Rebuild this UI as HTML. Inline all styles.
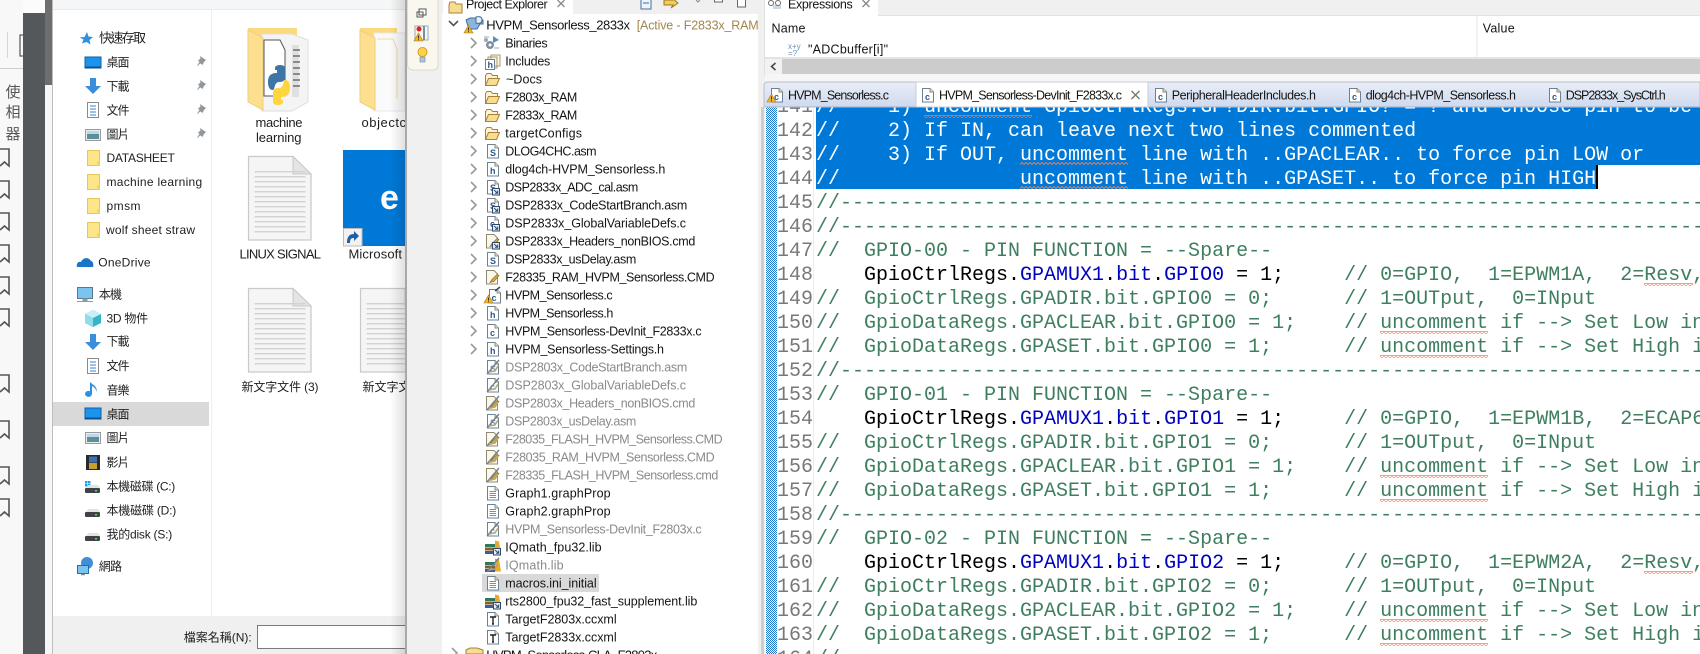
<!DOCTYPE html>
<html><head><meta charset="utf-8"><style>
html,body{margin:0;padding:0;width:1700px;height:654px;overflow:hidden;background:#fff}
svg{display:block}
text{white-space:pre}
.n{font:12px "Liberation Sans","Noto Sans CJK TC",sans-serif;fill:#1e1e1e}
.th{font:13px "Liberation Sans","Noto Sans CJK TC",sans-serif;fill:#1e1e1e}
.t{font:12.5px "Liberation Sans",sans-serif;fill:#141414}
.g{font:12.5px "Liberation Sans",sans-serif;fill:#8a8a8a}
.l{font:bold 9px "Liberation Sans",sans-serif;fill:#2b5a8c}
.lg{font:bold 9px "Liberation Sans",sans-serif;fill:#7d8fa0}
.m{font:20px "Liberation Mono",monospace}
.no{fill:#787878;text-anchor:end}
.c{fill:#3f7f5f}
.w{fill:#fff}
.k{fill:#000}
.b{fill:#0000c0}
</style></head><body>
<svg xmlns="http://www.w3.org/2000/svg" width="1700" height="654" viewBox="0 0 1700 654">
<defs>
<pattern id="dith" width="2" height="2" patternUnits="userSpaceOnUse"><rect width="2" height="2" fill="#fff"/><rect width="1" height="1" fill="#1f78d0"/><rect x="1" y="1" width="1" height="1" fill="#1f78d0"/></pattern>
<pattern id="sq" width="4" height="3" patternUnits="userSpaceOnUse"><path d="M0 2.5L2 .5L4 2.5" fill="none" stroke="#ec7a50" stroke-width="1"/></pattern>
<pattern id="dl" width="51" height="5" patternUnits="userSpaceOnUse"><rect width="51" height="1.4" fill="#d2d2d2"/></pattern>
<linearGradient id="sh" x1="0" x2="1" y1="0" y2="0"><stop offset="0" stop-color="#000" stop-opacity="0"/><stop offset="1" stop-color="#000" stop-opacity=".13"/></linearGradient>
<linearGradient id="tb" x1="0" x2="0" y1="0" y2="1"><stop offset="0" stop-color="#e9edf7"/><stop offset="1" stop-color="#cfdaef"/></linearGradient>
<g id="pg"><path d="M.5.5h7.5l3.5 3.5v10H.5z" fill="#fff" stroke="#6d8194"/><path d="M8 .5v3.5h3.5" fill="#e6e0c8" stroke="#9a8a60"/></g>
<g id="ch"><path d="M0 0l5 5-5 5" fill="none" stroke="#9a9a9a" stroke-width="1.6"/></g>
<g id="fo"><path d="M.5 13.5V3.5l1.5-2h4l1.5 2h5v3" fill="#fdf3cf" stroke="#a8813a"/><path d="M.5 13.5l3-7h11l-3 7z" fill="#f8dc90" stroke="#a8813a"/></g>
<g id="ln"><rect x=".5" y=".5" width="7" height="6.5" fill="#e8eef6" stroke="#2c4a70"/><path d="M2 2l3.5 3M3 5.3h2.7V2.5" fill="none" stroke="#2c4a70"/></g>
<g id="ex"><path d="M13 0L1 14" stroke="#6d8194" stroke-width="1.4"/><path d="M3 12l6-1 3-5" fill="none" stroke="#b8a468" stroke-width="1.5"/></g>
<g id="cm"><path d="M.5.5h7.5l3.5 3.5v10H.5z" fill="#fbf8ea" stroke="#8f8a70"/><path d="M4 12.5l2-3 5-5 2 1-5 6z" fill="#d9a93c" stroke="#8a6a20" stroke-width=".7"/></g>
<g id="tx"><use href="#pg"/><path d="M2.5 5.5h6.5M2.5 7.5h6.5M2.5 9.5h6.5M2.5 11.5h6.5" stroke="#6f8fb5"/></g>
<g id="li"><rect x="0" y="4" width="10" height="3" fill="#2f7a5a"/><rect x="0" y="7.500" width="10" height="3" fill="#8b5a2b"/><rect x="0" y="11" width="10" height="3" fill="#3a5f95"/><path d="M10 .5l4 1 2 12h-6z" fill="#e8a92c"/></g>
<g id="xm"><use href="#pg"/><path d="M3 5h6M6 5v7M5 12h2" stroke="#222" stroke-width="1.4" fill="none"/></g>
<g id="wn"><path d="M4.500 0l4.500 8H0z" fill="#f3b62e" stroke="#a97a12" stroke-width=".6"/><path d="M4.500 2.500v3M4.500 6.300v1" stroke="#333"/></g>
<g id="nf"><path d="M.5.500h12v15H.5z" fill="#fde68a" stroke="#e6c65a"/><path d="M10 11h2.500v4.500H10z" fill="#f5d56a"/></g>
<g id="dk"><path d="M86 8l2-3h10l2 3z" fill="#e3e3e3"/><rect x="85" y="8" width="15" height="5" rx="1" fill="#3f4347"/><rect x="95" y="10" width="2" height="1.500" fill="#55e055"/></g>
<g id="doc"><path d="M.5.500H45L63 18V84H.5z" fill="#f5f5f5" stroke="#c9c9c9" stroke-width="1.200"/><path d="M45 .5V18H63z" fill="#e4e4e4" stroke="#c9c9c9"/><rect x="6.500" y="14" width="51" height="64" fill="url(#dl)"/></g>
<clipPath id="cL"><rect x="0" y="0" width="23" height="654"/></clipPath>
<clipPath id="cD"><rect x="53" y="0" width="352.500" height="654"/></clipPath>
<clipPath id="cP"><rect x="442" y="0" width="316" height="654"/></clipPath>
</defs>

<!-- base -->
<rect width="1700" height="654" fill="#fff"/>

<!-- far left app -->
<rect x="0" y="0" width="23" height="654" fill="#f8f8f8"/>
<rect x="0" y="68" width="23" height="1" fill="#cfcfcf"/>
<rect x="7" y="32" width="1" height="26" fill="#d5d5d5"/>
<rect x="20" y="35" width="4" height="21" fill="none" stroke="#555" stroke-width="1.200"/>
<g clip-path="url(#cL)">
<text x="5.500" y="97" style="font:15px 'Noto Sans CJK TC',sans-serif" fill="#555">使</text>
<text x="5.500" y="117" style="font:15px 'Noto Sans CJK TC',sans-serif" fill="#555">相</text>
<text x="5.500" y="139" style="font:15px 'Noto Sans CJK TC',sans-serif" fill="#555">器</text>
</g>
<path id="bm" d="M0 149h9v17l-4.500-4L0 166" fill="none" stroke="#555" stroke-width="1.600"/>
<path d="M0 181h9v17l-4.500-4L0 198M0 213h9v17l-4.500-4L0 230M0 245h9v17l-4.500-4L0 262M0 277h9v17l-4.500-4L0 294M0 309h9v17l-4.500-4L0 326M0 375h9v17l-4.500-4L0 392M0 421h9v17l-4.500-4L0 438M0 467h9v17l-4.500-4L0 484M0 499h9v17l-4.500-4L0 516" fill="none" stroke="#555" stroke-width="1.600"/>

<!-- dark band -->
<rect x="23" y="13" width="22" height="641" fill="#54585b"/>
<rect x="23" y="0" width="22" height="13" fill="#fbfbfb"/>
<rect x="45" y="0" width="8" height="85" fill="#6e6e6e"/>
<rect x="45" y="85" width="7" height="569" fill="#f6f6f6"/>
<rect x="52" y="0" width="1" height="654" fill="#bdbdbd"/>

<!-- dialog -->
<rect x="53" y="0" width="353" height="654" fill="#fff"/>
<rect x="53" y="0" width="353" height="9" fill="#f5f6f7"/>
<rect x="53" y="9" width="353" height="1" fill="#eaeaea"/>
<rect x="211" y="10" width="1" height="606" fill="#efefef"/>
<rect x="53" y="402" width="156" height="24" fill="#d9d9d9"/>

<!-- nav icons -->
<path d="M87 32l1.500 4.500 4.500.5-3.500 3 1 4.500-4-2.500-4.500 1.500 1.500-4-4-2 5-.5z" fill="#2f8fe0"/>
<path d="M85 57h16v11H85z" fill="#1b94ee" stroke="#0e5fa8"/><rect x="85" y="66.500" width="16" height="2" fill="#0d4f8f"/>
<path d="M90 78h6v8h5l-8 8-8-8h5z" fill="#3a8fdc"/>
<rect x="87.500" y="102.500" width="11" height="15" fill="#fff" stroke="#8a8a8a"/><path d="M90 106h6M90 109h6M90 112h6M90 115h6" stroke="#3f85c9"/>
<rect x="85.500" y="129.500" width="15" height="11" fill="#e8eef0" stroke="#9a9a9a"/><path d="M87 134h12v5H87z" fill="#5c8f96"/><path d="M87 131h12v3H87z" fill="#bcd6ee"/>
<use href="#nf" x="87" y="150"/><use href="#nf" x="87" y="174"/><use href="#nf" x="87" y="198"/><use href="#nf" x="87" y="222"/>
<path d="M77 267c-1-4 2-6 4-5 2-5 8-5 10-1 2 0 3 4 2 6z" fill="#1a74c8"/>
<rect x="77.500" y="287.500" width="15" height="11" fill="#7cc4f0" stroke="#5a7890"/><path d="M83 299h4v2h-4zM77 301.500h16" stroke="#8a9aa8" fill="#8a9aa8"/>
<path d="M93 310l8 4v9l-8 4-8-4v-9z" fill="#34b6c8"/><path d="M93 310l8 4-8 4-8-4z" fill="#c9f0f6"/><path d="M85 314l8 4v9l-8-4z" fill="#8fdde8"/>
<path d="M90 341" fill="none"/>
<path d="M90 334h6v8h5l-8 8-8-8h5z" fill="#3a8fdc"/>
<rect x="87.500" y="358.500" width="11" height="15" fill="#fff" stroke="#8a8a8a"/><path d="M90 362h6M90 365h6M90 368h6M90 371h6" stroke="#3f85c9"/>
<path d="M92 382v12a3.500 3 0 1 1-2-2.800V382c3 3 7 4 7 10-1-3-3-5-5-6z" fill="#2a93e4"/>
<path d="M85 408h16v11H85z" fill="#1b94ee" stroke="#0e5fa8"/><rect x="85" y="417.500" width="16" height="2" fill="#0d4f8f"/>
<rect x="85.500" y="432.500" width="15" height="11" fill="#e8eef0" stroke="#9a9a9a"/><path d="M87 437h12v5H87z" fill="#5c8f96"/><path d="M87 434h12v3H87z" fill="#bcd6ee"/>
<rect x="86" y="455" width="14" height="15" fill="#2a2a2a"/><rect x="89" y="456.500" width="8" height="6" fill="#3a6fb0"/><rect x="89" y="463" width="8" height="6" fill="#c9a030"/>
<rect x="85" y="481" width="2.500" height="2.500" fill="#19a0f0"/><rect x="88" y="481" width="2.500" height="2.500" fill="#19a0f0"/><rect x="85" y="484" width="2.500" height="2.500" fill="#19a0f0"/><rect x="88" y="484" width="2.500" height="2.500" fill="#19a0f0"/>
<use href="#dk" y="480"/><use href="#dk" y="504"/><use href="#dk" y="528"/>
<circle cx="87" cy="563" r="6" fill="#3f8fd6"/><rect x="77.500" y="565.500" width="11" height="8" fill="#7cc4f0" stroke="#1b6fb8"/><path d="M81 574.500h4" stroke="#7a8a98" stroke-width="1.500"/>
<!-- pins -->
<path d="M200 56l6 4-2 2-1.500 3-2-1.500-4 3 3-4.500-1.500-1.500 2.500-2zM200 80l6 4-2 2-1.500 3-2-1.500-4 3 3-4.500-1.500-1.500 2.500-2zM200 104l6 4-2 2-1.500 3-2-1.500-4 3 3-4.500-1.500-1.500 2.500-2zM200 128l6 4-2 2-1.500 3-2-1.500-4 3 3-4.500-1.500-1.500 2.500-2z" fill="#8f979c"/>

<!-- nav text -->
<text class="th" x="99" y="42.500" textLength="47">快速存取</text>
<text class="n" x="106.500" y="66.500" textLength="23">桌面</text>
<text class="n" x="106.500" y="90.500" textLength="23">下載</text>
<text class="n" x="106.500" y="114.500" textLength="23">文件</text>
<text class="n" x="106.500" y="138.500" textLength="23">圖片</text>
<text class="n" x="106.500" y="162" textLength="68.300">DATASHEET</text>
<text class="n" x="106.500" y="186" textLength="95.700">machine learning</text>
<text class="n" x="106.500" y="210" textLength="34">pmsm</text>
<text class="n" x="106" y="234" textLength="89">wolf sheet straw</text>
<text class="n" x="98.300" y="266.500" textLength="52.300">OneDrive</text>
<text class="n" x="98.700" y="298.500" textLength="23.300">本機</text>
<text class="n" x="106.500" y="322.500" textLength="41.700">3D 物件</text>
<text class="n" x="106.500" y="345.500" textLength="23">下載</text>
<text class="n" x="106.500" y="370" textLength="23">文件</text>
<text class="n" x="106.500" y="394.500" textLength="23">音樂</text>
<text class="n" x="106.500" y="418.500" textLength="23">桌面</text>
<text class="n" x="106.500" y="442" textLength="23">圖片</text>
<text class="n" x="106.500" y="466.500" textLength="23">影片</text>
<text class="n" x="106.500" y="490.500" textLength="68.700">本機磁碟 (C:)</text>
<text class="n" x="106.500" y="514.500" textLength="69.700">本機磁碟 (D:)</text>
<text class="n" x="106.500" y="538.500" textLength="65.700">我的disk (S:)</text>
<text class="n" x="98.700" y="570.500" textLength="23.300">網路</text>

<!-- thumbnails -->
<g clip-path="url(#cD)">
<path d="M248 28h49v13h-49z" fill="#fbd97e"/>
<path d="M262 34h30l16 6v62l-16 9H262z" fill="#f4f4f4" stroke="#dedede"/>
<path d="M264 40h16l5 10v46h-21z" fill="#fff" stroke="#555"/>
<path d="M292 45h7v52h-7z" fill="#e0e0e0"/>
<path d="M293 50h7M293 56h7M293 62h7M293 68h7M293 74h7M293 80h7M293 86h7" stroke="#555" stroke-width="1.300"/>
<path d="M268 82c0-8 5-9 9-9v-3h-2v-2c0-4 10-4 10 0v9c0 5-4 5-6 5-5 0-4 8-6 8-4 0-5-4-5-8z" fill="#3c75a6"/>
<path d="M290 88c0 8-5 9-9 9v3h2v2c0 4-10 4-10 0v-9c0-5 4-5 6-5 5 0 4-8 6-8 4 0 5 4 5 8z" fill="#fcd53f"/>
<path d="M248 30l15 8v72l-15-8z" fill="#fce08f" stroke="#f0cf78"/>
<text class="th" x="255.500" y="127" textLength="47" fill="#222">machine</text>
<text class="th" x="256" y="142" textLength="45.500">learning</text>

<path d="M360 28h37v12h-37z" fill="#fbd97e"/>
<path d="M374 33h31v78h-31z" fill="#fafafa" stroke="#e8e8e8"/>
<path d="M377 39h16l4 10v50" fill="none" stroke="#f0dca0"/>
<path d="M360 30l15 8v72l-15-8z" fill="#fce08f" stroke="#f0cf78"/>
<text class="th" x="361.500" y="127" textLength="48">objectcl</text>

<use href="#doc" x="248" y="156"/>
<text class="th" x="239.500" y="258.500" textLength="81.500">LINUX SIGNAL</text>

<rect x="343" y="150" width="63" height="96" fill="#0078d7"/>
<text x="380" y="209" style="font:bold 34px 'Liberation Sans',sans-serif" fill="#fff">e</text>
<rect x="343.500" y="228.500" width="18.500" height="17.500" fill="#f2f2f2" stroke="#bbb"/>
<path d="M347 243c0-7 3-9 7-9v-3l5 5-5 5v-3c-3 0-4 1-4 5z" fill="#1f5fa8"/>
<text class="th" x="348.500" y="258.500" textLength="53.500">Microsoft</text>

<use href="#doc" x="248" y="288"/>
<use href="#doc" x="360" y="288"/>
<text class="n" x="241.500" y="391" textLength="77">新文字文件 (3)</text>
<text class="n" x="362.500" y="391" textLength="60">新文字文件</text>
</g>

<!-- dialog footer -->
<rect x="53" y="616" width="353" height="38" fill="#f0f0f0"/>
<text class="n" x="183.700" y="641.500" textLength="68">檔案名稱(N):</text>
<rect x="257.500" y="625.500" width="148" height="23" fill="#fff" stroke="#7a7a7a"/>
<rect x="390" y="0" width="16" height="654" fill="url(#sh)"/>
<rect x="405" y="0" width="2" height="654" fill="#a8a8a8"/>

<!-- left strip of eclipse -->
<rect x="407" y="0" width="35" height="654" fill="#f0f0f0"/>
<rect x="407.500" y="-6" width="30.500" height="76" rx="5" fill="#faf8ee" stroke="#dfdbc4"/>
<path d="M419 9h7v6h-7zM417 12h6v5h-6z" fill="#fff" stroke="#555"/>
<circle cx="419" cy="29" r="2.500" fill="#e0202a"/><rect x="415" y="26" width="13" height="14" fill="none" stroke="#9ab"/><path d="M424 26v14" stroke="#7090b0" stroke-width="2"/><use href="#wn" x="414" y="33"/>
<circle cx="422.500" cy="52" r="4.500" fill="#fbd24b" stroke="#e09a20"/><rect x="420" y="57" width="5" height="5" fill="#b0c4d8" stroke="#6a88a8" stroke-width=".6"/>

<!-- project explorer -->
<rect x="442" y="0" width="316" height="654" fill="#fff"/>
<rect x="442" y="0" width="316" height="14" fill="#f0f0f0"/>
<rect x="443" y="0" width="130" height="15" fill="#fff"/>
<path d="M449 5l1-3h5l1 2h6v9h-13z" fill="#f8dc90" stroke="#a8813a"/>
<text class="t" x="466" y="8.500" textLength="81.700">Project Explorer</text>
<path d="M557.500 0l7 7m0-7l-7 7" stroke="#888" stroke-width="1.300"/>
<path d="M641 -2h10v11h-10zM643 3h6" fill="#eef4fb" stroke="#3f6f9f"/>
<path d="M664 0h9l-2-3 7 6-7 5 2-3h-9zM677 6" fill="#f0cc5a" stroke="#a07a20"/>
<path d="M696 0l2 2 2-2" fill="none" stroke="#888"/>
<rect x="714.500" y="-3" width="8" height="5" fill="#fff" stroke="#666"/>
<rect x="737.500" y="-3" width="8" height="10" fill="#fff" stroke="#666"/>

<path d="M449 21l4.500 4.500 4.500-4.500" fill="none" stroke="#555" stroke-width="1.600"/>
<path d="M466 20l4-2h7l6 2v4h-3l-3 5h-8z" fill="#8fb4dc" stroke="#3f6f9f"/><path d="M476 17c4-1 6 0 6 3s-3 4-6 3z" fill="#e8eef6" stroke="#3f6f9f"/><use href="#wn" x="464" y="25"/>
<g clip-path="url(#cP)">
<text class="t" x="486.300" y="29.500" textLength="143.700" style="font-size:13px">HVPM_Sensorless_2833x</text>
<text x="636.700" y="29.500" textLength="122" style="font:12.500px 'Liberation Sans',sans-serif;fill:#a2864e">[Active - F2833x_RAM</text>

<rect x="482" y="574" width="117" height="18" fill="#d9d9d9"/>

<!-- chevrons -->
<use href="#ch" x="471" y="38"/><use href="#ch" x="471" y="56"/><use href="#ch" x="471" y="74"/><use href="#ch" x="471" y="92"/><use href="#ch" x="471" y="110"/><use href="#ch" x="471" y="128"/><use href="#ch" x="471" y="146"/><use href="#ch" x="471" y="164"/><use href="#ch" x="471" y="182"/><use href="#ch" x="471" y="200"/><use href="#ch" x="471" y="218"/><use href="#ch" x="471" y="236"/><use href="#ch" x="471" y="254"/><use href="#ch" x="471" y="272"/><use href="#ch" x="471" y="290"/><use href="#ch" x="471" y="308"/><use href="#ch" x="471" y="326"/><use href="#ch" x="471" y="344"/>
<use href="#ch" x="452" y="648"/>

<!-- tree icons -->
<path d="M493 36l6 4-6 3z" fill="#5a8fc0"/><circle cx="490" cy="45" r="4" fill="#8090a0"/><circle cx="490" cy="45" r="1.500" fill="#fff"/><circle cx="486" cy="40" r="2" fill="#9aa8b4"/><path d="M484 37h5M494 48h5" stroke="#a0a8b0"/>
<path d="M491 55h9v11h-9zM488 57h9v11h-9z" fill="#fbf8ea" stroke="#a89a70"/><path d="M485.500 59.500h9v10h-9z" fill="#fff" stroke="#6d8194"/><text class="l" x="487.500" y="68">h</text>
<use href="#fo" x="485" y="72"/><use href="#fo" x="485" y="90"/><use href="#fo" x="485" y="108"/><use href="#fo" x="485" y="126"/>
<use href="#pg" x="487" y="144"/><text class="l" x="490" y="156">S</text>
<use href="#pg" x="487" y="162"/><text class="l" x="490" y="174">h</text>
<use href="#pg" x="487" y="180"/><text class="l" x="490" y="191">S</text><use href="#ln" x="492" y="188"/>
<use href="#pg" x="487" y="198"/><text class="l" x="490" y="209">S</text><use href="#ln" x="492" y="206"/>
<use href="#pg" x="487" y="216"/><text class="l" x="490" y="227">c</text><use href="#ln" x="492" y="224"/>
<use href="#cm" x="486" y="234"/><use href="#ln" x="492" y="242"/>
<use href="#pg" x="487" y="252"/><text class="l" x="490" y="264">S</text>
<use href="#cm" x="486" y="270"/>
<use href="#pg" x="489" y="289"/><text class="l" x="491.500" y="301">c</text><path d="M495 291l5-4" stroke="#2c4a70" stroke-width="1.500"/><use href="#wn" x="484" y="295"/>
<use href="#pg" x="487" y="306"/><text class="l" x="490" y="318">h</text>
<use href="#pg" x="487" y="324"/><text class="l" x="490" y="336">c</text>
<use href="#pg" x="487" y="342"/><text class="l" x="490" y="354">h</text>
<use href="#pg" x="487" y="360"/><text class="lg" x="490" y="372">S</text><use href="#ex" x="486" y="360"/>
<use href="#pg" x="487" y="378"/><text class="lg" x="490" y="390">c</text><use href="#ex" x="486" y="378"/>
<use href="#cm" x="486" y="396"/><use href="#ex" x="486" y="396"/>
<use href="#pg" x="487" y="414"/><text class="lg" x="490" y="426">S</text><use href="#ex" x="486" y="414"/>
<use href="#cm" x="486" y="432"/><use href="#ex" x="486" y="432"/>
<use href="#cm" x="486" y="450"/><use href="#ex" x="486" y="450"/>
<use href="#cm" x="486" y="468"/><use href="#ex" x="486" y="468"/>
<use href="#tx" x="487" y="486"/>
<use href="#tx" x="487" y="504"/>
<use href="#pg" x="487" y="522"/><text class="lg" x="490" y="534">c</text><use href="#ex" x="486" y="522"/>
<use href="#li" x="485" y="540"/><use href="#ln" x="493" y="548"/>
<use href="#li" x="485" y="558"/><use href="#ex" x="486" y="558"/>
<use href="#tx" x="487" y="576"/>
<use href="#li" x="485" y="594"/><use href="#ln" x="493" y="602"/>
<use href="#xm" x="487" y="612"/>
<use href="#xm" x="487" y="630"/>
<path d="M466 650l4-2h7l6 2v4h-17z" fill="#f8dc90" stroke="#a8813a"/>

<!-- tree text -->
<text class="t" x="505.300" y="47.300" textLength="42.300">Binaries</text>
<text class="t" x="505.300" y="65.300" textLength="45">Includes</text>
<text class="t" x="506" y="83.300" textLength="36">~Docs</text>
<text class="t" x="505.300" y="101.300" textLength="72">F2803x_RAM</text>
<text class="t" x="505.300" y="119.300" textLength="72">F2833x_RAM</text>
<text class="t" x="505.300" y="137.300" textLength="76.700">targetConfigs</text>
<text class="t" x="505.300" y="155.300" textLength="91.300">DLOG4CHC.asm</text>
<text class="t" x="505.300" y="173.300" textLength="160">dlog4ch-HVPM_Sensorless.h</text>
<text class="t" x="505.300" y="191.300" textLength="133">DSP2833x_ADC_cal.asm</text>
<text class="t" x="505.300" y="209.300" textLength="182">DSP2833x_CodeStartBranch.asm</text>
<text class="t" x="505.300" y="227.300" textLength="180.700">DSP2833x_GlobalVariableDefs.c</text>
<text class="t" x="505.300" y="245.300" textLength="190">DSP2833x_Headers_nonBIOS.cmd</text>
<text class="t" x="505.300" y="263.300" textLength="131">DSP2833x_usDelay.asm</text>
<text class="t" x="505.300" y="281.300" textLength="209.300">F28335_RAM_HVPM_Sensorless.CMD</text>
<text class="t" x="505.300" y="299.300" textLength="107.300">HVPM_Sensorless.c</text>
<text class="t" x="505.300" y="317.300" textLength="108">HVPM_Sensorless.h</text>
<text class="t" x="505.300" y="335.300" textLength="196.300">HVPM_Sensorless-DevInit_F2833x.c</text>
<text class="t" x="505.300" y="353.300" textLength="158.700">HVPM_Sensorless-Settings.h</text>
<text class="g" x="505.300" y="371.300" textLength="182">DSP2803x_CodeStartBranch.asm</text>
<text class="g" x="505.300" y="389.300" textLength="180.700">DSP2803x_GlobalVariableDefs.c</text>
<text class="g" x="505.300" y="407.300" textLength="190">DSP2803x_Headers_nonBIOS.cmd</text>
<text class="g" x="505.300" y="425.300" textLength="131">DSP2803x_usDelay.asm</text>
<text class="g" x="505.300" y="443.300" textLength="217.300">F28035_FLASH_HVPM_Sensorless.CMD</text>
<text class="g" x="505.300" y="461.300" textLength="209.300">F28035_RAM_HVPM_Sensorless.CMD</text>
<text class="g" x="505.300" y="479.300" textLength="213">F28335_FLASH_HVPM_Sensorless.cmd</text>
<text class="t" x="505.300" y="497.300" textLength="105.300">Graph1.graphProp</text>
<text class="t" x="505.300" y="515.300" textLength="105.300">Graph2.graphProp</text>
<text class="g" x="505.300" y="533.300" textLength="196.300">HVPM_Sensorless-DevInit_F2803x.c</text>
<text class="t" x="505.300" y="551.300" textLength="96.300">IQmath_fpu32.lib</text>
<text class="g" x="505.300" y="569.300" textLength="58.300">IQmath.lib</text>
<text class="t" x="505.300" y="587.300" textLength="91.300">macros.ini_initial</text>
<text class="t" x="505.300" y="605.300" textLength="192">rts2800_fpu32_fast_supplement.lib</text>
<text class="t" x="505.300" y="623.300" textLength="111.300">TargetF2803x.ccxml</text>
<text class="t" x="505.300" y="641.300" textLength="111.300">TargetF2833x.ccxml</text>
<text class="t" x="486.300" y="659.300" textLength="171" style="font-size:13px">HVPM_Sensorless-CLA_F2803x</text>
</g>

<!-- gutter between -->
<rect x="758" y="0" width="7" height="654" fill="#f0f0f0"/>
<rect x="761" y="107" width="3" height="547" fill="#cfcfcf"/>

<!-- editor -->
<rect x="765" y="107" width="935" height="547" fill="#fff"/>
<rect x="766" y="107" width="11" height="547" fill="url(#dith)"/>
<rect x="813" y="107" width="1" height="547" fill="#ececec"/>
<rect x="816" y="93" width="884" height="72" fill="#0078d7"/>
<rect x="816" y="165" width="780" height="24" fill="#0078d7"/>
<rect x="1596" y="165" width="2" height="24" fill="#000"/>

<g class="m" style="font:20px 'Liberation Mono',monospace">
<g class="no">
<text x="813" y="112">141</text><text x="813" y="136">142</text><text x="813" y="160">143</text><text x="813" y="184">144</text><text x="813" y="208">145</text><text x="813" y="232">146</text><text x="813" y="256">147</text><text x="813" y="280">148</text><text x="813" y="304">149</text><text x="813" y="328">150</text><text x="813" y="352">151</text><text x="813" y="376">152</text><text x="813" y="400">153</text><text x="813" y="424">154</text><text x="813" y="448">155</text><text x="813" y="472">156</text><text x="813" y="496">157</text><text x="813" y="520">158</text><text x="813" y="544">159</text><text x="813" y="568">160</text><text x="813" y="592">161</text><text x="813" y="616">162</text><text x="813" y="640">163</text><text x="813" y="664">164</text>
</g>
<g class="w">
<text x="816" y="112">//    1) uncomment GpioCtrlRegs.GP?DIR.bit.GPIO? = ? and choose pin to be</text>
<text x="816" y="136">//    2) If IN, can leave next two lines commented</text>
<text x="816" y="160">//    3) If OUT, uncomment line with ..GPACLEAR.. to force pin LOW or</text>
<text x="816" y="184">//               uncomment line with ..GPASET.. to force pin HIGH</text>
</g>
<g class="c">
<text x="816" y="208">//----------------------------------------------------------------------------</text>
<text x="816" y="232">//----------------------------------------------------------------------------</text>
<text x="816" y="256">//  GPIO-00 - PIN FUNCTION = --Spare--</text>
<text x="816" y="304">//  GpioCtrlRegs.GPADIR.bit.GPIO0 = 0;      // 1=OUTput,  0=INput</text>
<text x="816" y="328">//  GpioDataRegs.GPACLEAR.bit.GPIO0 = 1;    // uncomment if --&gt; Set Low in</text>
<text x="816" y="352">//  GpioDataRegs.GPASET.bit.GPIO0 = 1;      // uncomment if --&gt; Set High in</text>
<text x="816" y="376">//----------------------------------------------------------------------------</text>
<text x="816" y="400">//  GPIO-01 - PIN FUNCTION = --Spare--</text>
<text x="816" y="448">//  GpioCtrlRegs.GPADIR.bit.GPIO1 = 0;      // 1=OUTput,  0=INput</text>
<text x="816" y="472">//  GpioDataRegs.GPACLEAR.bit.GPIO1 = 1;    // uncomment if --&gt; Set Low in</text>
<text x="816" y="496">//  GpioDataRegs.GPASET.bit.GPIO1 = 1;      // uncomment if --&gt; Set High in</text>
<text x="816" y="520">//----------------------------------------------------------------------------</text>
<text x="816" y="544">//  GPIO-02 - PIN FUNCTION = --Spare--</text>
<text x="816" y="592">//  GpioCtrlRegs.GPADIR.bit.GPIO2 = 0;      // 1=OUTput,  0=INput</text>
<text x="816" y="616">//  GpioDataRegs.GPACLEAR.bit.GPIO2 = 1;    // uncomment if --&gt; Set Low in</text>
<text x="816" y="640">//  GpioDataRegs.GPASET.bit.GPIO2 = 1;      // uncomment if --&gt; Set High in</text>
<text x="816" y="664">//</text>
</g>
<text x="816" y="280"><tspan class="k">    GpioCtrlRegs.</tspan><tspan class="b">GPAMUX1</tspan><tspan class="k">.</tspan><tspan class="b">bit</tspan><tspan class="k">.</tspan><tspan class="b">GPIO0</tspan><tspan class="k"> = 1;     </tspan><tspan class="c">// 0=GPIO,  1=EPWM1A,  2=Resv,</tspan></text>
<text x="816" y="424"><tspan class="k">    GpioCtrlRegs.</tspan><tspan class="b">GPAMUX1</tspan><tspan class="k">.</tspan><tspan class="b">bit</tspan><tspan class="k">.</tspan><tspan class="b">GPIO1</tspan><tspan class="k"> = 1;     </tspan><tspan class="c">// 0=GPIO,  1=EPWM1B,  2=ECAP6,</tspan></text>
<text x="816" y="568"><tspan class="k">    GpioCtrlRegs.</tspan><tspan class="b">GPAMUX1</tspan><tspan class="k">.</tspan><tspan class="b">bit</tspan><tspan class="k">.</tspan><tspan class="b">GPIO2</tspan><tspan class="k"> = 1;     </tspan><tspan class="c">// 0=GPIO,  1=EPWM2A,  2=Resv,</tspan></text>
</g>

<!-- squiggles -->
<g fill="url(#sq)">
<rect x="924" y="115" width="108" height="3"/>
<rect x="1020" y="162" width="108" height="3"/>
<rect x="1020" y="186" width="108" height="3"/>
<rect x="1644" y="283" width="49" height="3"/>
<rect x="1380" y="331" width="108" height="3"/>
<rect x="1380" y="355" width="108" height="3"/>
<rect x="1380" y="475" width="108" height="3"/>
<rect x="1380" y="499" width="108" height="3"/>
<rect x="1644" y="571" width="49" height="3"/>
<rect x="1380" y="619" width="108" height="3"/>
<rect x="1380" y="643" width="108" height="3"/>
</g>

<!-- expressions panel -->
<rect x="765" y="0" width="935" height="82" fill="#fff"/>
<rect x="765" y="0" width="935" height="15" fill="#f0f0f0"/>
<rect x="765" y="15" width="935" height="1" fill="#e2e2e2"/>
<rect x="765" y="0" width="113" height="16" fill="#fff"/>
<circle cx="771" cy="3" r="2.500" fill="none" stroke="#666"/><circle cx="778" cy="3" r="2.500" fill="none" stroke="#666"/><path d="M773 8h8M773 6h8" stroke="#7a9abc" stroke-width=".8"/>
<text class="t" x="788" y="8.500" textLength="64.700">Expressions</text>
<path d="M862.500 0l7 7m0-7l-7 7" stroke="#888" stroke-width="1.300"/>
<text class="t" x="771.500" y="32.500" textLength="34">Name</text>
<text class="t" x="1482.700" y="32.500" textLength="32">Value</text>
<rect x="1476.500" y="16" width="1" height="41" fill="#e4e4e4"/>
<text x="788" y="49" style="font:8px 'Liberation Sans',sans-serif" fill="#6f8fb5">x+y</text>
<text x="788" y="56" style="font:8px 'Liberation Sans',sans-serif" fill="#6f8fb5">=?</text>
<text class="t" x="808" y="53.500" textLength="80">"ADCbuffer[i]"</text>
<rect x="765" y="57" width="935" height="2" fill="#e4e4e4"/>
<rect x="765" y="59" width="17" height="15" fill="#f2f2f2"/>
<path d="M775.500 63l-4 3.500 4 3.500" fill="none" stroke="#444" stroke-width="1.500"/>
<rect x="782" y="59" width="918" height="15" fill="#cccccc"/>
<rect x="765" y="74" width="935" height="8" fill="#f6f6f6"/>
<rect x="764" y="0" width="1" height="76" fill="#e0e0e0"/>

<!-- editor tabs -->
<path d="M764 107V86q0-4 4-4H1700V107z" fill="url(#tb)" stroke="#b8bfca"/>
<rect x="765" y="106" width="935" height="1" fill="#b8c4d8"/>
<path d="M916 107V82h232v25z" fill="#fff" stroke="#c5ccd8"/>
<use href="#pg" x="771" y="88"/><text class="l" x="774" y="100">c</text><use href="#wn" x="767" y="94"/>
<text class="t" x="788" y="99.500" textLength="101">HVPM_Sensorless.c</text>
<use href="#pg" x="922" y="88"/><text class="l" x="925" y="100">c</text>
<text class="t" x="939" y="99.500" textLength="183">HVPM_Sensorless-DevInit_F2833x.c</text>
<path d="M1131.500 91l8 8m0-8l-8 8" stroke="#777" stroke-width="1.400"/>
<use href="#pg" x="1155" y="88"/><text class="l" x="1158" y="100">c</text>
<text class="t" x="1171.700" y="99.500" textLength="144.300">PeripheralHeaderIncludes.h</text>
<use href="#pg" x="1349" y="88"/><text class="l" x="1352" y="100">c</text>
<text class="t" x="1365.700" y="99.500" textLength="150.300">dlog4ch-HVPM_Sensorless.h</text>
<use href="#pg" x="1549" y="88"/><text class="l" x="1552" y="100">c</text>
<text class="t" x="1565.700" y="99.500" textLength="100">DSP2833x_SysCtrl.h</text>
</svg>
</body></html>
